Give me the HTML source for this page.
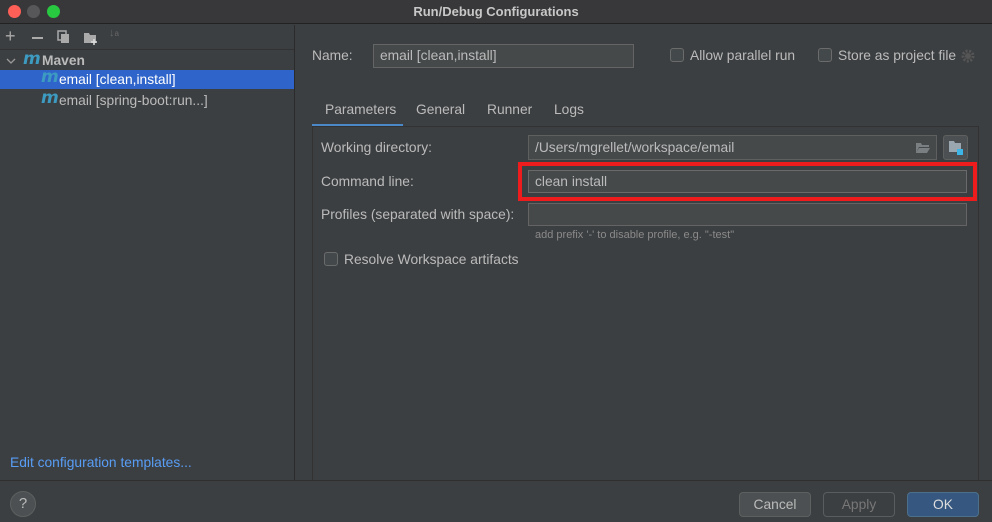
<!DOCTYPE html>
<html><head><meta charset="utf-8"><style>
*{margin:0;padding:0;box-sizing:border-box}
body{width:992px;height:522px;background:#3c3f41;font-family:"Liberation Sans",sans-serif;font-size:13.8px;color:#bbbbbb;position:relative;overflow:hidden}
.a{position:absolute}
.title{left:0;top:0;width:992px;height:24px;background:#38383a;border-bottom:1px solid #222;text-align:center;line-height:23px;color:#c8c8c8;font-weight:bold;font-size:13px}
.dot{top:5px;width:13px;height:13px;border-radius:50%}
.field{background:#45494a;border:1px solid #646464;height:24px;line-height:22px;padding-left:6px;color:#bbbbbb}
.cb{width:14px;height:14px;border:1px solid #6b6b6b;border-radius:3px;background:#43494a}
.btn{height:25px;border:1px solid #5e6060;border-radius:4px;background:#4c5052;text-align:center;line-height:23px;color:#bbb}
.m{color:#3d9bc1;font-style:italic;font-weight:bold;font-size:17px;font-family:"DejaVu Sans",sans-serif}
</style></head><body>
<div class="a title">Run/Debug Configurations</div>
<div class="a dot" style="left:8px;background:#fe5f57"></div>
<div class="a dot" style="left:27px;background:#57575a"></div>
<div class="a dot" style="left:47px;background:#28c840"></div>

<div class="a" style="left:294px;top:25px;width:1px;height:455px;background:#2b2b2b"></div>
<div class="a" style="left:0;top:480px;width:992px;height:1px;background:#2f2f2f"></div>
<div class="a" style="left:0;top:49px;width:294px;height:1px;background:#323232"></div>

<div class="a" style="left:5px;top:27px;font-size:18px;color:#aaa;line-height:18px">+</div>
<div class="a" style="left:32px;top:37px;width:11px;height:2px;background:#aaa"></div>
<svg class="a" style="left:57px;top:30px" width="14" height="14"><rect x="1" y="1" width="8" height="9" fill="none" stroke="#aaa" stroke-width="1.5"/><rect x="4" y="4" width="8" height="9" fill="#aaa"/></svg>
<svg class="a" style="left:83px;top:31px" width="16" height="14"><path d="M1 2h5l1 2h6v8H1z" fill="#aaa"/><path d="M11 8v6M8 11h6" stroke="#ddd" stroke-width="1.5"/></svg>
<div class="a" style="left:109px;top:27px;font-size:11px;color:#666">↓<span style="font-size:8px">a<br></span></div>

<svg class="a" style="left:6px;top:56px" width="10" height="10"><path d="M1 3l4 4 4-4" stroke="#999" fill="none" stroke-width="1.3"/></svg>
<div class="a m" style="left:23px;top:49px">m</div>
<div class="a" style="left:42px;top:53px;font-weight:bold;color:#bbb">Maven</div>
<div class="a" style="left:0;top:70px;width:294px;height:19px;background:#2f65ca"></div>
<div class="a m" style="left:41px;top:67px">m</div>
<div class="a" style="left:59px;top:72px;color:#fff">email [clean,install]</div>
<div class="a m" style="left:41px;top:88px">m</div>
<div class="a" style="left:59px;top:93px;color:#bbb">email [spring-boot:run...]</div>
<div class="a" style="left:10px;top:455px;color:#589df6">Edit configuration templates...</div>

<div class="a" style="left:312px;top:48px">Name:</div>
<div class="a field" style="left:373px;top:44px;width:261px">email [clean,install]</div>
<div class="a cb" style="left:670px;top:48px"></div>
<div class="a" style="left:690px;top:48px">Allow parallel run</div>
<div class="a cb" style="left:818px;top:48px"></div>
<div class="a" style="left:838px;top:48px">Store as project file</div>
<svg class="a" style="left:961px;top:49px" width="14" height="14"><circle cx="7" cy="7" r="5" fill="none" stroke="#555" stroke-width="3" stroke-dasharray="2 1.5"/><circle cx="7" cy="7" r="3" fill="#555"/></svg>

<div class="a" style="left:325px;top:102px">Parameters</div>
<div class="a" style="left:416px;top:102px">General</div>
<div class="a" style="left:487px;top:102px">Runner</div>
<div class="a" style="left:554px;top:102px">Logs</div>
<div class="a" style="left:312px;top:124px;width:91px;height:3px;background:#4a88c7"></div>
<div class="a" style="left:312px;top:126px;width:667px;height:354px;border:1px solid #323232;border-bottom:none"></div>

<div class="a" style="left:321px;top:140px">Working directory:</div>
<div class="a field" style="left:528px;top:135px;width:409px;height:25px;border-color:#5e6060;line-height:23px">/Users/mgrellet/workspace/email</div>
<svg class="a" style="left:915px;top:141px" width="16" height="13"><path d="M1 2h5l1 2h7v2H4L1 12z M4 7h11l-3 5H1z" fill="#7a7f82"/></svg>
<div class="a" style="left:943px;top:135px;width:25px;height:25px;border:1px solid #5e6060;border-radius:3px;background:#4c5052"></div>
<svg class="a" style="left:948px;top:140px" width="16" height="16"><path d="M1 1h5l1 2h6v9H1z" fill="#9aa7b0"/><rect x="9" y="9" width="6" height="6" fill="#3cb5e6"/></svg>

<div class="a" style="left:321px;top:174px">Command line:</div>
<div class="a field" style="left:528px;top:170px;width:439px;height:23px;line-height:21px;border-color:#6a6a6a">clean install</div>
<div class="a" style="left:518px;top:162px;width:459px;height:39px;border:4px solid #ee1c1c"></div>

<div class="a" style="left:321px;top:207px">Profiles (separated with space):</div>
<div class="a field" style="left:528px;top:203px;width:439px;height:23px"></div>
<div class="a" style="left:535px;top:229px;font-size:11px;color:#8a8a8a">add prefix '-' to disable profile, e.g. "-test"</div>
<div class="a cb" style="left:324px;top:252px"></div>
<div class="a" style="left:344px;top:252px">Resolve Workspace artifacts</div>

<div class="a" style="left:10px;top:491px;width:26px;height:26px;border-radius:50%;background:#4c5052;border:1px solid #5e6060;text-align:center;line-height:24px;font-size:15px;color:#bbb">?</div>
<div class="a btn" style="left:739px;top:492px;width:72px">Cancel</div>
<div class="a btn" style="left:823px;top:492px;width:72px;background:#3c3f41;color:#777;border-color:#5a5d5f">Apply</div>
<div class="a btn" style="left:907px;top:492px;width:72px;background:#365880;border-color:#4c708c;color:#ddd">OK</div>
</body></html>
